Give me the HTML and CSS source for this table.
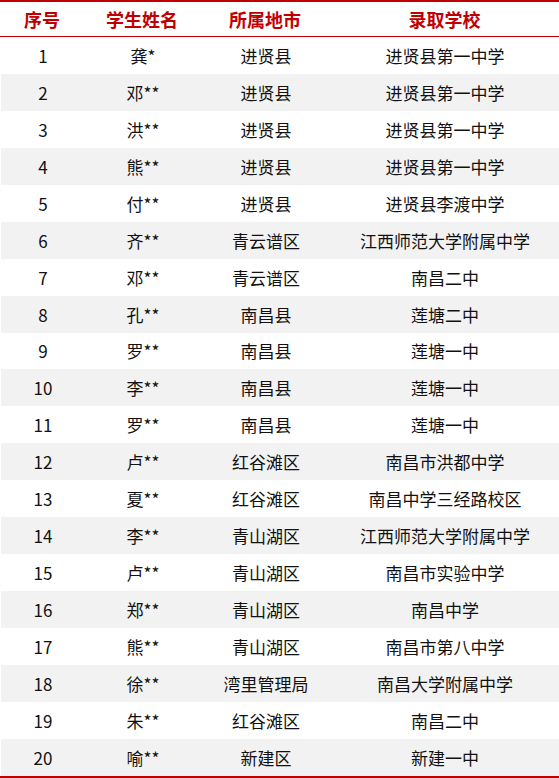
FILE: index.html
```html
<!DOCTYPE html>
<html lang="zh-CN">
<head>
<meta charset="utf-8">
<link rel="stylesheet" href="styles.css">
</head>
<body>
<div class="table">
  <div class="row head"><div>序号</div><div>学生姓名</div><div>所属地市</div><div>录取学校</div></div>
  <div class="row"><div>1</div><div>龚*</div><div>进贤县</div><div>进贤县第一中学</div></div>
  <div class="row alt"><div>2</div><div>邓**</div><div>进贤县</div><div>进贤县第一中学</div></div>
  <div class="row"><div>3</div><div>洪**</div><div>进贤县</div><div>进贤县第一中学</div></div>
  <div class="row alt"><div>4</div><div>熊**</div><div>进贤县</div><div>进贤县第一中学</div></div>
  <div class="row"><div>5</div><div>付**</div><div>进贤县</div><div>进贤县李渡中学</div></div>
  <div class="row alt"><div>6</div><div>齐**</div><div>青云谱区</div><div>江西师范大学附属中学</div></div>
  <div class="row"><div>7</div><div>邓**</div><div>青云谱区</div><div>南昌二中</div></div>
  <div class="row alt"><div>8</div><div>孔**</div><div>南昌县</div><div>莲塘二中</div></div>
  <div class="row"><div>9</div><div>罗**</div><div>南昌县</div><div>莲塘一中</div></div>
  <div class="row alt"><div>10</div><div>李**</div><div>南昌县</div><div>莲塘一中</div></div>
  <div class="row"><div>11</div><div>罗**</div><div>南昌县</div><div>莲塘一中</div></div>
  <div class="row alt"><div>12</div><div>卢**</div><div>红谷滩区</div><div>南昌市洪都中学</div></div>
  <div class="row"><div>13</div><div>夏**</div><div>红谷滩区</div><div>南昌中学三经路校区</div></div>
  <div class="row alt"><div>14</div><div>李**</div><div>青山湖区</div><div>江西师范大学附属中学</div></div>
  <div class="row"><div>15</div><div>卢**</div><div>青山湖区</div><div>南昌市实验中学</div></div>
  <div class="row alt"><div>16</div><div>郑**</div><div>青山湖区</div><div>南昌中学</div></div>
  <div class="row"><div>17</div><div>熊**</div><div>青山湖区</div><div>南昌市第八中学</div></div>
  <div class="row alt"><div>18</div><div>徐**</div><div>湾里管理局</div><div>南昌大学附属中学</div></div>
  <div class="row"><div>19</div><div>朱**</div><div>红谷滩区</div><div>南昌二中</div></div>
  <div class="row alt"><div>20</div><div>喻**</div><div>新建区</div><div>新建一中</div></div>
</div>
</body>
</html>
```
FILE: styles.css
```css
html, body {
  margin: 0;
  padding: 0;
  background: #ffffff;
}
body {
  width: 559px;
  font-family: "Noto Sans CJK SC", "Noto Sans", sans-serif;
  font-size: 17px;
  color: #111111;
}
.table {
  border-top: 2px solid #c00000;
  border-bottom: 2px solid #c00000;
}
.row {
  display: grid;
  grid-template-columns: 84px 116px 130px 1fr;
  height: 36.95px;
  align-items: center;
  text-align: center;
  line-height: 1;
  margin-left: 1px;
}
.row.head {
  height: 34px;
  margin-left: 0;
  border-bottom: 1px solid #c00000;
  color: #c00000;
  font-weight: bold;
  font-size: 18px;
}
.row.alt {
  background: #f2f2f2;
}
```
